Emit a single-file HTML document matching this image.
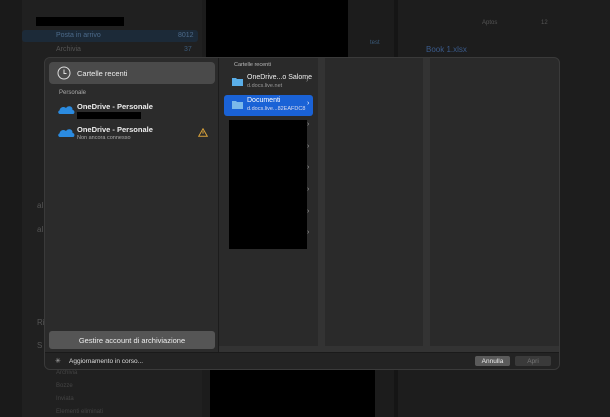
<!DOCTYPE html>
<html><head><meta charset="utf-8"><style>
*{margin:0;padding:0;box-sizing:border-box}
body{width:610px;height:417px;overflow:hidden;background:#1e1e1e;font-family:"Liberation Sans",sans-serif;position:relative;color:#ddd}
.a{position:absolute}
.t{position:absolute;white-space:nowrap}
</style></head><body>
<!-- background app -->
<div class="a" style="left:0;top:0;width:22px;height:417px;background:#1a1a1a"></div>
<div class="a" style="left:22px;top:0;width:180px;height:417px;background:#202020"></div>
<div class="a" style="left:202px;top:0;width:192px;height:417px;background:#1c1c1c"></div>
<div class="a" style="left:206px;top:0;width:142px;height:57px;background:#000"></div>
<div class="a" style="left:210px;top:370px;width:165px;height:47px;background:#000"></div>
<div class="a" style="left:394px;top:0;width:4px;height:417px;background:#151515"></div>
<div class="a" style="left:398px;top:0;width:212px;height:417px;background:#1d1d1d"></div>
<div class="a" style="left:36px;top:17px;width:88px;height:9px;background:#000"></div>
<div class="a" style="left:22px;top:30px;width:176px;height:12px;background:#1c2a38;border-radius:3px"></div>
<div class="t" style="left:56px;top:32px;font-size:7px;color:#4c6a8a">Posta in arrivo</div>
<div class="t" style="left:178px;top:32px;font-size:7px;color:#4c6a8a">8012</div>
<div class="t" style="left:56px;top:46px;font-size:7px;color:#555">Archivia</div>
<div class="t" style="left:184px;top:46px;font-size:7px;color:#3a5a7a">37</div>
<div class="t" style="left:370px;top:40px;font-size:6px;color:#3a5a7a">test</div>
<div class="t" style="left:482px;top:20px;font-size:6px;color:#555">Aptos</div>
<div class="t" style="left:541px;top:20px;font-size:6px;color:#555">12</div>
<div class="t" style="left:426px;top:45px;font-size:8px;color:#3a5a8a">Book 1.xlsx</div>
<div class="t" style="left:37px;top:201px;font-size:8px;color:#555">al</div>
<div class="t" style="left:37px;top:225px;font-size:8px;color:#555">al</div>
<div class="t" style="left:37px;top:318px;font-size:8px;color:#555">Ri</div>
<div class="t" style="left:37px;top:341px;font-size:8px;color:#555">S</div>
<div class="t" style="left:56px;top:370px;font-size:6px;color:#444">Archivia</div>
<div class="t" style="left:56px;top:383px;font-size:6px;color:#444">Bozze</div>
<div class="t" style="left:56px;top:396px;font-size:6px;color:#444">Inviata</div>
<div class="t" style="left:56px;top:409px;font-size:6px;color:#444">Elementi eliminati</div>

<!-- dialog -->
<div class="a" style="left:44px;top:57px;width:516px;height:313px;background:#2a2a2a;border:1px solid #3a3a3a;border-radius:6px;overflow:hidden">
  <div class="a" style="left:0;top:0;width:174px;height:294px;background:#2b2b2b;border-right:1px solid #1c1c1c"></div>
  <div class="a" style="left:4px;top:4px;width:166px;height:22px;background:#4a4a4a;border-radius:4px"></div>
  <svg class="a" style="left:12px;top:8px" width="14" height="14" viewBox="0 0 14 14"><circle cx="7" cy="7" r="6" fill="none" stroke="#ddd" stroke-width="1"/><path d="M7 3.5V7.5H9.5" fill="none" stroke="#ddd" stroke-width="1"/></svg>
  <div class="t" style="left:32px;top:11px;font-size:7.5px;color:#eee">Cartelle recenti</div>
  <div class="t" style="left:14px;top:32px;font-size:6px;color:#aaa">Personale</div>
  <svg class="a" style="left:12px;top:45px" width="18" height="12" viewBox="0 0 18 12"><path d="M3 11C1 11 0.5 8 2.5 7.5 3 4 7 3 9 5 11 2 16 3 15.5 7 18 7 18 11 16 11Z" fill="#2b8be0"/></svg>
  <div class="t" style="left:32px;top:44px;font-size:7.5px;color:#eee;font-weight:bold">OneDrive - Personale</div>
  <div class="a" style="left:32px;top:54px;width:64px;height:7px;background:#000"></div>
  <svg class="a" style="left:12px;top:68px" width="18" height="12" viewBox="0 0 18 12"><path d="M3 11C1 11 0.5 8 2.5 7.5 3 4 7 3 9 5 11 2 16 3 15.5 7 18 7 18 11 16 11Z" fill="#2b8be0"/></svg>
  <div class="t" style="left:32px;top:67px;font-size:7.5px;color:#eee;font-weight:bold">OneDrive - Personale</div>
  <div class="t" style="left:32px;top:77px;font-size:5.5px;color:#aaa">Non ancora connesso</div>
  <svg class="a" style="left:153px;top:70px" width="10" height="9" viewBox="0 0 10 9"><path d="M5 0.8L9.3 8.3H0.7Z" fill="none" stroke="#d9a23a" stroke-width="1"/><path d="M5 3.3V5.8" stroke="#d9a23a"/></svg>
  <div class="a" style="left:4px;top:273px;width:166px;height:18px;background:#555;border-radius:3px"></div>
  <div class="t" style="left:4px;top:278px;width:166px;text-align:center;font-size:7.5px;color:#eee">Gestire account di archiviazione</div>

  <div class="t" style="left:189px;top:4px;font-size:5.5px;color:#bbb">Cartelle recenti</div>
  <svg class="a" style="left:187px;top:19px" width="11" height="9" viewBox="0 0 11 9"><path d="M0 1h4l1 1h6v7H0Z" fill="#5aaee8"/></svg>
  <div class="t" style="left:202px;top:16px;font-size:7px;color:#eee">OneDrive...o Salome</div>
  <div class="t" style="left:202px;top:25px;font-size:5.5px;color:#999">d.docs.live.net</div>
  <div class="t" style="left:261px;top:19px;font-size:7px;color:#999">›</div>
  <div class="a" style="left:179px;top:37px;width:89px;height:21px;background:#1a62d6;border-radius:3px"></div>
  <svg class="a" style="left:187px;top:42px" width="11" height="9" viewBox="0 0 11 9"><path d="M0 1h4l1 1h6v7H0Z" fill="#7ab8ea"/></svg>
  <div class="t" style="left:202px;top:39px;font-size:7px;color:#fff">Documenti</div>
  <div class="t" style="left:202px;top:48px;font-size:5.5px;color:#dde">d.docs.live...82EAFDC8</div>
  <div class="t" style="left:262px;top:42px;font-size:7px;color:#fff">›</div>
  <div class="a" style="left:184px;top:62px;width:78px;height:129px;background:#000"></div>
  <div class="t" style="left:262px;top:63px;font-size:7px;color:#999">›</div>
  <div class="t" style="left:262px;top:85px;font-size:7px;color:#999">›</div>
  <div class="t" style="left:262px;top:106px;font-size:7px;color:#999">›</div>
  <div class="t" style="left:262px;top:128px;font-size:7px;color:#999">›</div>
  <div class="t" style="left:262px;top:150px;font-size:7px;color:#999">›</div>
  <div class="t" style="left:262px;top:171px;font-size:7px;color:#999">›</div>
  <div class="a" style="left:273px;top:0;width:7px;height:294px;background:#333"></div>
  <div class="a" style="left:378px;top:0;width:7px;height:294px;background:#333"></div>
  <div class="a" style="left:174px;top:288px;width:342px;height:6px;background:#333"></div>
  <div class="a" style="left:0;top:294px;width:516px;height:19px;background:#232323;border-top:1px solid #1a1a1a"></div>
  <div class="t" style="left:10px;top:299px;font-size:7px;color:#aaa">✳</div>
  <div class="t" style="left:24px;top:300px;font-size:6.5px;color:#ddd">Aggiornamento in corso...</div>
  <div class="a" style="left:430px;top:298px;width:35px;height:10px;background:#5a5a5a;border-radius:2px"></div>
  <div class="t" style="left:430px;top:299.5px;width:35px;text-align:center;font-size:6.5px;color:#eee">Annulla</div>
  <div class="a" style="left:470px;top:298px;width:36px;height:10px;background:#3a3a3a;border-radius:2px"></div>
  <div class="t" style="left:470px;top:299.5px;width:36px;text-align:center;font-size:6.5px;color:#777">Apri</div>
</div>
</body></html>
